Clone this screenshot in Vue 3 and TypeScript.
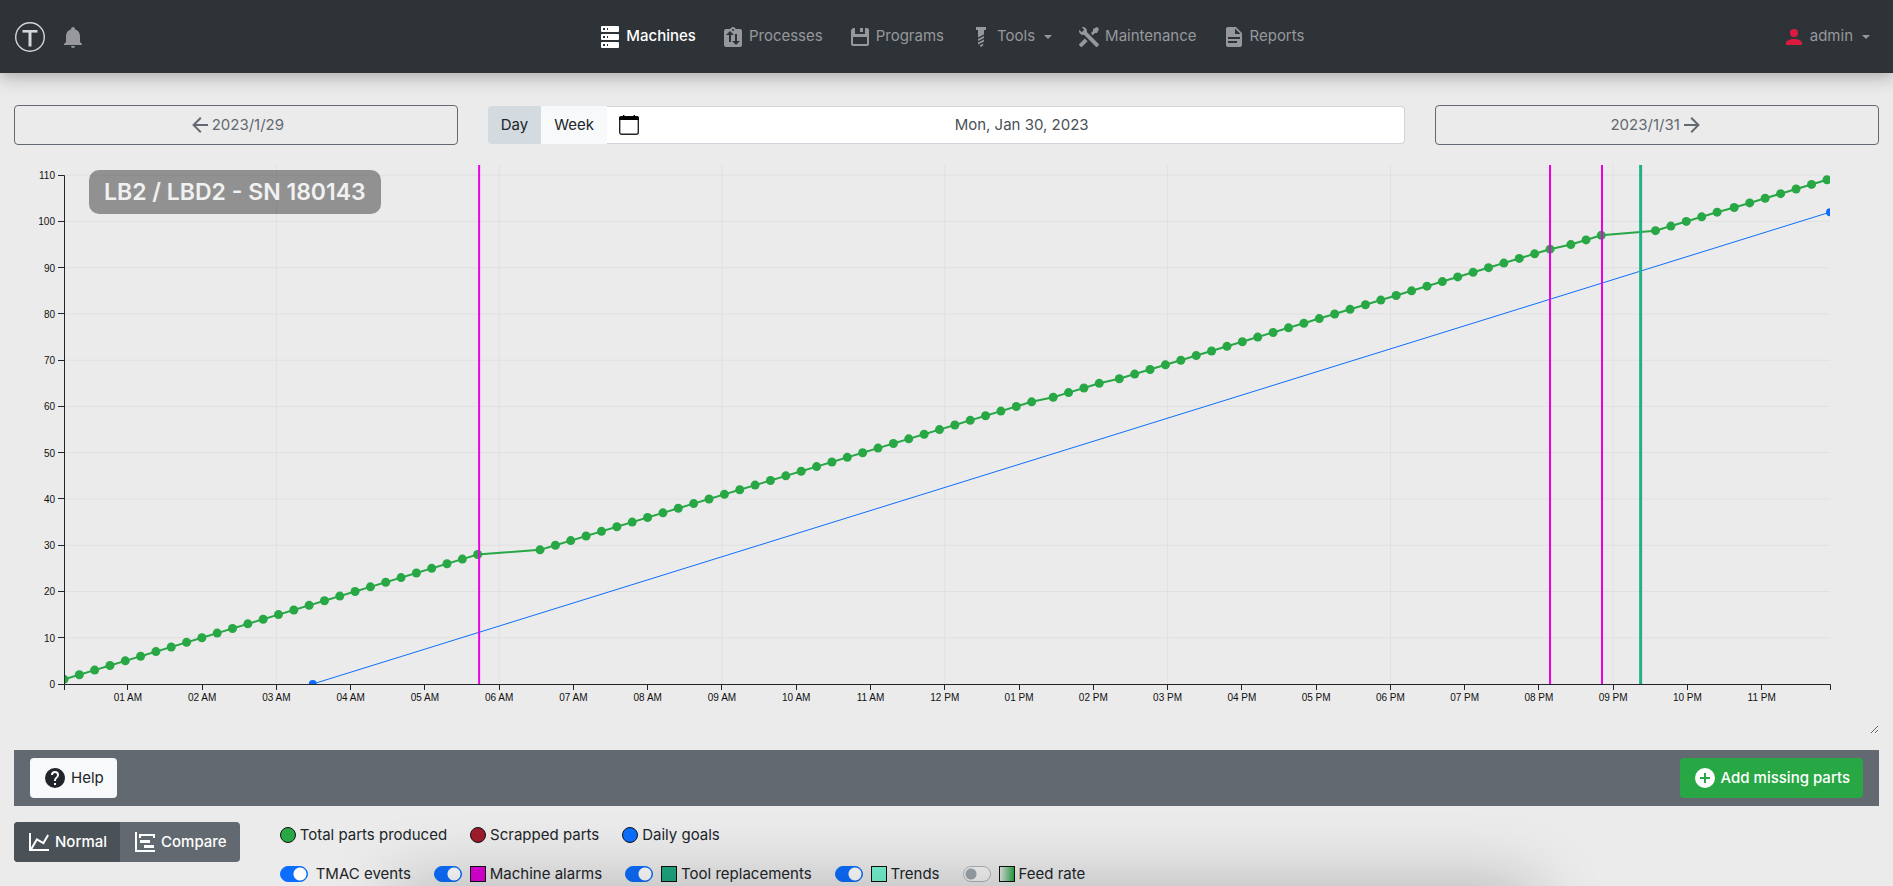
<script setup lang="ts">
import { computed, onBeforeUnmount, onMounted, ref } from 'vue'

interface NavItem {
  label: string
  icon: string
  active?: boolean
  dropdown?: boolean
}

const icons: Record<string, string> = {
  bell: 'M21,19V20H3V19L5,17V11C5,7.9 7.03,5.17 10,4.29C10,4.19 10,4.1 10,4A2,2 0 0,1 12,2A2,2 0 0,1 14,4C14,4.1 14,4.19 14,4.29C16.97,5.17 19,7.9 19,11V17L21,19M14,21A2,2 0 0,1 12,23A2,2 0 0,1 10,21',
  server:
    'M4,1H20A1,1 0 0,1 21,2V6A1,1 0 0,1 20,7H4A1,1 0 0,1 3,6V2A1,1 0 0,1 4,1M4,9H20A1,1 0 0,1 21,10V14A1,1 0 0,1 20,15H4A1,1 0 0,1 3,14V10A1,1 0 0,1 4,9M4,17H20A1,1 0 0,1 21,18V22A1,1 0 0,1 20,23H4A1,1 0 0,1 3,22V18A1,1 0 0,1 4,17M9,5H10V3H9V5M9,13H10V11H9V13M9,21H10V19H9V21M5,3V5H7V3H5M5,11V13H7V11H5M5,19V21H7V19H5Z',
  flow: 'M19,4H14.82C14.25,2.44 12.53,1.64 11,2.2C10.14,2.5 9.5,3.16 9.18,4H5A2,2 0 0,0 3,6V20A2,2 0 0,0 5,22H19A2,2 0 0,0 21,20V6A2,2 0 0,0 19,4M12,4A1,1 0 0,1 13,5A1,1 0 0,1 12,6A1,1 0 0,1 11,5A1,1 0 0,1 12,4M10,17H8V10H5L9,6L13,10H10V17M15,20L11,16H14V9H16V16H19L15,20Z',
  floppy:
    'M5,21A2,2 0 0,1 3,19V5L5,3H7V9H17V3H19A2,2 0 0,1 21,5V19A2,2 0 0,1 19,21H5M5,19H19V12H5V19M12,3H15V7H12V3Z',
  screw:
    'M7,2H17V5H15V9.5L9,12.5V5H7V2M9,14L15,11V13L9,16V14M9,17.5L15,14.5V16.5L9,19.5V17.5M10.5,20.5L14.5,18.5L14,20.5L12,22L10.5,20.5Z',
  tools:
    'M21.71 20.29L20.29 21.71A1 1 0 0 1 18.88 21.71L7 9.85A3.81 3.81 0 0 1 6 10A4 4 0 0 1 2.22 4.7L4.76 7.24L5.29 6.71L6.71 5.29L7.24 4.76L4.7 2.22A4 4 0 0 1 10 6A3.81 3.81 0 0 1 9.85 7L21.71 18.88A1 1 0 0 1 21.71 20.29M2.29 18.88A1 1 0 0 0 2.29 20.29L3.71 21.71A1 1 0 0 0 5.12 21.71L10.59 16.25L7.76 13.42M20 2L16 4V6L13.83 8.17L15.83 10.17L18 8H20L22 4Z',
  document:
    'M13,9H18.5L13,3.5V9M6,2H14L20,8V20A2,2 0 0,1 18,22H6C4.89,22 4,21.1 4,20V4C4,2.89 4.89,2 6,2M15,18V16H6V18H15M18,14V12H6V14H18Z',
  account:
    'M12,4A4,4 0 0,1 16,8A4,4 0 0,1 12,12A4,4 0 0,1 8,8A4,4 0 0,1 12,4M12,14C16.42,14 20,15.79 20,18V20H4V18C4,15.79 7.58,14 12,14Z',
  help: 'M15.07,11.25L14.17,12.17C13.45,12.89 13,13.5 13,15H11V14.5C11,13.39 11.45,12.39 12.17,11.67L13.41,10.41C13.78,10.05 14,9.55 14,9C14,7.89 13.1,7 12,7A2,2 0 0,0 10,9H8A4,4 0 0,1 12,5A4,4 0 0,1 16,9C16,9.88 15.64,10.67 15.07,11.25M13,19H11V17H13M12,2A10,10 0 0,0 2,12A10,10 0 0,0 12,22A10,10 0 0,0 22,12C22,6.47 17.5,2 12,2Z',
  plus: 'M17,13H13V17H11V13H7V11H11V7H13V11H17M12,2A10,10 0 0,0 2,12A10,10 0 0,0 12,22A10,10 0 0,0 22,12A10,10 0 0,0 12,2Z',
  left: 'M20,11V13H8L13.5,18.5L12.08,19.92L4.16,12L12.08,4.08L13.5,5.5L8,11H20Z',
  right: 'M4,11V13H16L10.5,18.5L11.92,19.92L19.84,12L11.92,4.08L10.5,5.5L16,11H4Z',
  line: 'M16,11.78L20.24,4.45L21.97,5.45L16.74,14.5L10.23,10.75L5.46,19H22V21H2V3H4V17.54L9.5,8L16,11.78Z',
  timeline: 'M2,2H4V20H22V22H2V2M7,10H17V13H7V10M11,15H21V18H11V15M6,4H22V8H20V6H8V8H6V4Z',
}

const navItems: NavItem[] = [
  { label: 'Machines', icon: 'server', active: true },
  { label: 'Processes', icon: 'flow' },
  { label: 'Programs', icon: 'floppy' },
  { label: 'Tools', icon: 'screw', dropdown: true },
  { label: 'Maintenance', icon: 'tools' },
  { label: 'Reports', icon: 'document' },
]

const series = [
  { label: 'Total parts produced', tone: 'good' },
  { label: 'Scrapped parts', tone: 'scrap' },
  { label: 'Daily goals', tone: 'daily' },
]

const overlays = ref([
  { id: 'tmac', label: 'TMAC events', swatch: '', on: true },
  { id: 'alarms', label: 'Machine alarms', swatch: 'alarm', on: true },
  { id: 'tools', label: 'Tool replacements', swatch: 'tool', on: true },
  { id: 'trends', label: 'Trends', swatch: 'trend', on: true },
  { id: 'feed', label: 'Feed rate', swatch: 'feed', on: false },
])

const range = ref('Day')
const mode = ref('Normal')

/* Chart: x is measured in hours since midnight, y in parts. */
const holder = ref<HTMLElement | null>(null)
const width = ref(1865)
const height = 570
const margin = { left: 50, right: 49, top: 2, bottom: 49 }
const firstHour = 0.14
const lastHour = 23.92
const topValue = 112.2

const x = (hour: number) =>
  margin.left + ((hour - firstHour) / (lastHour - firstHour)) * (width.value - margin.left - margin.right)
const y = (value: number) =>
  height - margin.bottom - (value / topValue) * (height - margin.bottom - margin.top)

/* Runs of evenly paced parts: [first part, last part, first hour, last hour] */
const runs = [
  [1, 28, 0.14, 5.71],
  [29, 61, 6.55, 13.17],
  [62, 65, 13.46, 14.08],
  [66, 94, 14.35, 20.15],
  [95, 97, 20.43, 20.84],
  [98, 102, 21.57, 22.4],
  [103, 109, 22.63, 23.88],
]

const points = computed(() =>
  runs.flatMap(([a, b, from, to]) =>
    Array.from({ length: b - a + 1 }, (_, i) => ({
      n: a + i,
      cx: x(from + ((to - from) * i) / (b - a)),
      cy: y(a + i),
    })),
  ),
)
const partsLine = computed(() => points.value.map((p) => `${p.cx},${p.cy}`).join(' '))

const hours = Array.from({ length: 23 }, (_, i) => i + 1)
const gridHours = hours.filter((h) => h % 3 === 0)
const values = Array.from({ length: 12 }, (_, i) => i * 10)
const alarms = [5.73, 20.15, 20.85]
const replacement = 21.37
const hourLabel = (h: number) =>
  `${String(h % 12 === 0 ? 12 : h % 12).padStart(2, '0')} ${h < 12 ? 'AM' : 'PM'}`
const crisp = (v: number) => Math.floor(v) + 0.5

let observer: ResizeObserver | undefined
onMounted(() => {
  const measure = () => {
    if (holder.value) width.value = holder.value.clientWidth
  }
  measure()
  observer = new ResizeObserver(measure)
  if (holder.value) observer.observe(holder.value)
})
onBeforeUnmount(() => observer?.disconnect())
</script>

<template>
  <div class="page">
    <header class="navbar">
      <div class="brand">
        <a href="#" aria-label="Home">
          <svg class="logo" viewBox="0 0 30 30">
            <circle cx="15" cy="15" r="14.3" />
            <path class="bar" d="M7.5 9.3H22.5" />
            <path class="stem" d="M15 10V24.5" />
          </svg>
        </a>
        <button class="bell" aria-label="Notifications">
          <svg class="icon" viewBox="0 0 24 24"><path :d="icons.bell" /></svg>
        </button>
      </div>
      <nav class="menu">
        <a v-for="item in navItems" :key="item.label" href="#" class="nav-link" :class="{ active: item.active }">
          <svg class="icon" viewBox="0 0 24 24"><path fill-rule="evenodd" :d="icons[item.icon]" /></svg>
          <span>{{ item.label }}</span>
          <i v-if="item.dropdown" class="caret"></i>
        </a>
      </nav>
      <a href="#" class="nav-link user">
        <svg class="icon" viewBox="0 0 24 24"><path :d="icons.account" /></svg>
        <span>admin</span>
        <i class="caret"></i>
      </a>
    </header>

    <main>
      <div class="dates">
        <div class="cell">
          <button class="step">
            <svg class="icon" viewBox="0 0 24 24"><path :d="icons.left" /></svg><span>2023/1/29</span>
          </button>
        </div>
        <div class="cell">
          <div class="picker">
            <button
              v-for="r in ['Day', 'Week']"
              :key="r"
              class="range"
              :class="{ chosen: range === r }"
              @click="range = r"
            >
              {{ r }}
            </button>
            <div class="date-field">
              <button class="calendar" aria-label="Open calendar">
                <svg viewBox="0 0 20 20">
                  <rect x="0.7" y="1.7" width="18.6" height="17.6" rx="2" fill="none" stroke="currentColor" stroke-width="1.4" />
                  <path d="M0 5V3.5A2 2 0 0 1 2 1.3H4V0H5.4V1.3H14.6V0H16V1.3H18A2 2 0 0 1 20 3.5V5Z" />
                </svg>
              </button>
              <button class="date">Mon, Jan 30, 2023</button>
            </div>
          </div>
        </div>
        <div class="cell">
          <button class="step">
            <span>2023/1/31</span><svg class="icon" viewBox="0 0 24 24"><path :d="icons.right" /></svg>
          </button>
        </div>
      </div>

      <section ref="holder" class="chart">
        <h1 class="title">LB2 / LBD2 - SN 180143</h1>
        <svg :width="width" :height="height" class="plot">
          <defs>
            <clipPath id="plot-area">
              <rect
                :x="margin.left"
                :y="margin.top"
                :width="width - margin.left - margin.right"
                :height="height - margin.top - margin.bottom"
              />
            </clipPath>
          </defs>
          <g class="grid">
            <line v-for="h in gridHours" :key="'v' + h" :x1="x(h)" :x2="x(h)" :y1="margin.top" :y2="y(0)" />
            <line v-for="v in values.slice(1)" :key="'h' + v" :x1="x(firstHour)" :x2="x(lastHour)" :y1="y(v)" :y2="y(v)" />
          </g>
          <g clip-path="url(#plot-area)">
            <polyline class="parts" :points="partsLine" />
            <circle v-for="p in points" :key="p.n" class="part" :cx="p.cx" :cy="p.cy" r="4.5" />
            <line class="goal" :x1="x(3.49)" :y1="y(0)" :x2="x(lastHour)" :y2="y(102)" />
            <circle class="goal-dot" :cx="x(3.49)" :cy="y(0)" r="4" />
            <circle class="goal-dot" :cx="x(lastHour)" :cy="y(102)" r="4" />
            <line v-for="a in alarms" :key="a" class="alarm-line" :x1="x(a)" :x2="x(a)" :y1="margin.top" :y2="y(0)" />
            <line class="tool-line" :x1="x(replacement)" :x2="x(replacement)" :y1="margin.top" :y2="y(0)" />
          </g>
          <g class="axis">
            <path :d="`M${margin.left - 6} ${crisp(y(110))}H${crisp(margin.left)}V${crisp(y(0))}H${margin.left - 6}`" />
            <path
              :d="`M${crisp(margin.left)} ${y(0) + 6}V${crisp(y(0))}H${crisp(x(lastHour))}V${y(0) + 6}`"
            />
            <g v-for="v in values" :key="v">
              <line :x1="margin.left - 6" :x2="margin.left" :y1="crisp(y(v))" :y2="crisp(y(v))" />
              <text :x="margin.left - 9" :y="y(v) + 4" text-anchor="end">{{ v }}</text>
            </g>
            <g v-for="h in hours" :key="h">
              <line :x1="crisp(x(h))" :x2="crisp(x(h))" :y1="y(0)" :y2="y(0) + 6" />
              <text :x="x(h)" :y="y(0) + 17" text-anchor="middle">{{ hourLabel(h) }}</text>
            </g>
          </g>
        </svg>
      </section>

      <div class="toolbar">
        <button class="btn help">
          <svg class="icon" viewBox="0 0 24 24"><path :d="icons.help" /></svg><span>Help</span>
        </button>
        <button class="btn add">
          <svg class="icon" viewBox="0 0 24 24"><path :d="icons.plus" /></svg><span>Add missing parts</span>
        </button>
      </div>

      <div class="controls">
        <div class="modes">
          <button class="btn mode" :class="{ chosen: mode === 'Normal' }" @click="mode = 'Normal'">
            <svg class="icon" viewBox="0 0 24 24"><path :d="icons.line" /></svg><span>Normal</span>
          </button>
          <button class="btn mode" :class="{ chosen: mode === 'Compare' }" @click="mode = 'Compare'">
            <svg class="icon" viewBox="0 0 24 24"><path :d="icons.timeline" /></svg><span>Compare</span>
          </button>
        </div>
        <div class="legend">
          <div class="legend-row">
            <span v-for="s in series" :key="s.label" class="entry">
              <i class="dot" :class="s.tone"></i>{{ s.label }}
            </span>
          </div>
          <div class="legend-row">
            <label v-for="o in overlays" :key="o.id" class="toggle" :for="o.id">
              <input :id="o.id" v-model="o.on" type="checkbox" role="switch" class="switch" />
              <span class="entry"><i v-if="o.swatch" class="square" :class="o.swatch"></i>{{ o.label }}</span>
            </label>
          </div>
        </div>
      </div>
    </main>
    <div class="under-shadow"></div>
  </div>
</template>

<style>
body {
  margin: 0;
  background: #ebebeb;
}
</style>

<style scoped>
.page {
  position: relative;
  box-sizing: border-box;
  min-height: 100vh;
  overflow: hidden;
  background: #ebebeb;
  color: #212529;
  font-family: Inter, 'Liberation Sans', sans-serif;
  font-size: 15px;
  line-height: 24px;
}
button {
  font: inherit;
  color: inherit;
  border: 0;
  background: none;
  padding: 0;
  cursor: pointer;
}
a {
  color: inherit;
  text-decoration: none;
}
.icon {
  width: 24px;
  height: 24px;
  flex: none;
  fill: currentColor;
}
.navbar {
  display: flex;
  align-items: center;
  justify-content: space-between;
  height: 73px;
  padding: 0 23px 0 15px;
  box-sizing: border-box;
  background: #2e3338;
  box-shadow: 0 8px 16px rgba(0, 0, 0, 0.15), 0 0 12px rgba(0, 0, 0, 0.15);
  color: #96989b;
}
.brand {
  display: flex;
  align-items: center;
  gap: 16px;
  width: 106px;
}
.brand a,
.bell {
  display: flex;
}
.logo {
  width: 30px;
  height: 30px;
  fill: none;
  stroke: #d5d6d7;
  stroke-width: 1.4;
}
.logo .bar {
  stroke-width: 2.6;
}
.logo .stem {
  stroke-width: 3;
}
.menu {
  display: flex;
  gap: 25px;
}
.nav-link {
  display: flex;
  align-items: center;
  gap: 4px;
}
.nav-link span {
  padding-bottom: 2px;
}
.nav-link.active {
  color: #fff;
  font-weight: 500;
}
.user .icon {
  color: #dc1a40;
}
.caret {
  margin-left: 5px;
  border: 4px solid transparent;
  border-top-color: currentColor;
  border-bottom: 0;
}
.dates {
  display: grid;
  grid-template-columns: 1fr 2fr 1fr;
  align-items: center;
  margin: 32px -1px 0;
}
.cell {
  padding: 0 15px;
}
.step {
  display: flex;
  align-items: center;
  justify-content: center;
  width: 100%;
  height: 40px;
  border: 1px solid #626970;
  border-radius: 4px;
  color: #626970;
}
.picker {
  display: flex;
  height: 38px;
  border-radius: 4px;
}
.range {
  padding: 0 13px;
  background: #f8f9fa;
}
.range.chosen {
  background: #d3dae0;
  border-radius: 4px 0 0 4px;
}
.date-field {
  display: flex;
  flex: 1;
  align-items: center;
  padding-left: 12px;
  background: #fff;
  border: 1px solid #ced4da;
  border-left: 0;
  border-radius: 0 4px 4px 0;
}
.calendar {
  display: flex;
}
.calendar svg {
  width: 20px;
  height: 20px;
}
.date {
  flex: 1;
  color: #495057;
}
.chart {
  position: relative;
  margin: 18px 14px 0;
  height: 571px;
  overflow: hidden;
  resize: vertical;
}
.plot {
  display: block;
}
.title {
  position: absolute;
  left: 75px;
  top: 7px;
  margin: 0;
  padding: 8px 15px;
  border-radius: 10px;
  background: rgba(0, 0, 0, 0.38);
  color: #f1f1f1;
  font-size: 23px;
  font-weight: 600;
  line-height: 28px;
}
.grid line {
  stroke: #e0e0e0;
}
.parts {
  fill: none;
  stroke: #28a745;
  stroke-width: 2;
}
.part {
  fill: #28a745;
}
.goal {
  stroke: #0d6efd;
  stroke-width: 1;
}
.goal-dot {
  fill: #0d6efd;
}
.alarm-line {
  stroke: #ea00e0;
  stroke-width: 2;
}
.tool-line {
  stroke: #20b286;
  stroke-width: 3;
}
.axis line,
.axis path {
  fill: none;
  stroke: #212529;
}
.axis text {
  font-family: 'Liberation Sans', Arial, sans-serif;
  font-size: 10px;
  fill: #111;
}
.toolbar {
  display: flex;
  justify-content: space-between;
  margin: 16px 14px 0;
  padding: 8px 16px;
  background: #626970;
}
.btn {
  display: flex;
  align-items: center;
  gap: 4px;
  height: 40px;
  padding: 0 13px;
  border-radius: 4px;
}
.help {
  background: #f8f9fa;
}
.add {
  background: #28a745;
  color: #fff;
  font-weight: 500;
}
.controls {
  display: flex;
  gap: 40px;
  align-items: flex-start;
  margin: 16px 14px 0;
}
.modes {
  display: flex;
  overflow: hidden;
  border-radius: 4px;
  background: #626970;
  color: #fff;
  font-weight: 500;
}
.mode {
  border-radius: 0;
}
.mode.chosen {
  background: #4a5157;
}
.legend {
  display: flex;
  flex-direction: column;
  gap: 15px;
  padding-top: 1px;
}
.legend-row {
  display: flex;
  gap: 23px;
}
.entry {
  display: flex;
  align-items: center;
  gap: 4px;
}
.toggle {
  display: flex;
  align-items: center;
  gap: 8px;
}
.dot,
.square {
  box-sizing: border-box;
  width: 16px;
  height: 16px;
  border: 1px solid #111;
}
.dot {
  border-radius: 50%;
}
.good {
  background: #28a745;
}
.scrap {
  background: #9f1c2c;
}
.daily {
  background: #0d6efd;
}
.alarm {
  background: #e000d8;
}
.tool {
  background: #20a983;
}
.trend {
  background: #75f5d2;
}
.feed {
  background: linear-gradient(90deg, #e6e6e6, #28a745);
}
.switch {
  appearance: none;
  box-sizing: border-box;
  width: 28px;
  height: 16px;
  margin: 0;
  border: 1px solid #adb5bd;
  border-radius: 8px;
  background: radial-gradient(circle at 7px 7px, #9da5ad 5px, transparent 6px) #f4f4f4;
}
.switch:checked {
  border-color: #0d6efd;
  background: radial-gradient(circle at 19px 7px, #fff 6px, transparent 7px) #0d6efd;
}
.under-shadow {
  position: absolute;
  top: 100%;
  left: 21%;
  right: 19%;
  height: 80px;
  box-shadow: 0 0 70px 0 rgba(0, 0, 0, 0.25);
  pointer-events: none;
}
</style>
